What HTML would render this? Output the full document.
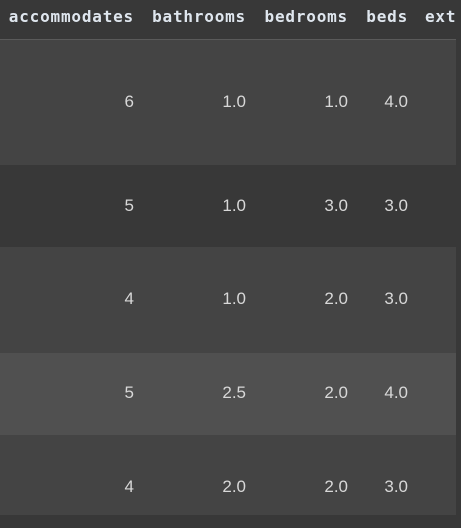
<!DOCTYPE html><html><head><style>
body{margin:0;width:461px;height:528px;background:#383838;overflow:hidden;position:relative}
.h{position:absolute;top:7px;font:bold 16px "DejaVu Sans Mono","Liberation Mono",monospace;letter-spacing:0.8px;color:#dfe6ee;white-space:nowrap}
.line{position:absolute;left:0;top:39px;width:456px;height:1px;background:#5a5a5a}
.r{position:absolute;left:0;width:456px}
.v{position:absolute;font:17px "Liberation Sans",sans-serif;color:#d8d8d8;text-align:right;width:60px}
</style></head><body>
<div class="h" style="right:327px">accommodates</div>
<div class="h" style="right:215px">bathrooms</div>
<div class="h" style="right:113px">bedrooms</div>
<div class="h" style="right:53px">beds</div>
<div class="h" style="left:425px">ext</div>
<div class="line"></div>
<div class="r" style="top:40px;height:125px;background:#444"></div>
<div class="r" style="top:165px;height:82px;background:#383838"></div>
<div class="r" style="top:247px;height:106px;background:#444"></div>
<div class="r" style="top:353px;height:82px;background:#505050"></div>
<div class="r" style="top:435px;height:80px;background:#444"></div>
<div class="v" style="top:92px;left:74px">6</div><div class="v" style="top:92px;left:186px">1.0</div><div class="v" style="top:92px;left:288px">1.0</div><div class="v" style="top:92px;left:348px">4.0</div>
<div class="v" style="top:196px;left:74px">5</div><div class="v" style="top:196px;left:186px">1.0</div><div class="v" style="top:196px;left:288px">3.0</div><div class="v" style="top:196px;left:348px">3.0</div>
<div class="v" style="top:289px;left:74px">4</div><div class="v" style="top:289px;left:186px">1.0</div><div class="v" style="top:289px;left:288px">2.0</div><div class="v" style="top:289px;left:348px">3.0</div>
<div class="v" style="top:383px;left:74px">5</div><div class="v" style="top:383px;left:186px">2.5</div><div class="v" style="top:383px;left:288px">2.0</div><div class="v" style="top:383px;left:348px">4.0</div>
<div class="v" style="top:477px;left:74px">4</div><div class="v" style="top:477px;left:186px">2.0</div><div class="v" style="top:477px;left:288px">2.0</div><div class="v" style="top:477px;left:348px">3.0</div>
</body></html>
